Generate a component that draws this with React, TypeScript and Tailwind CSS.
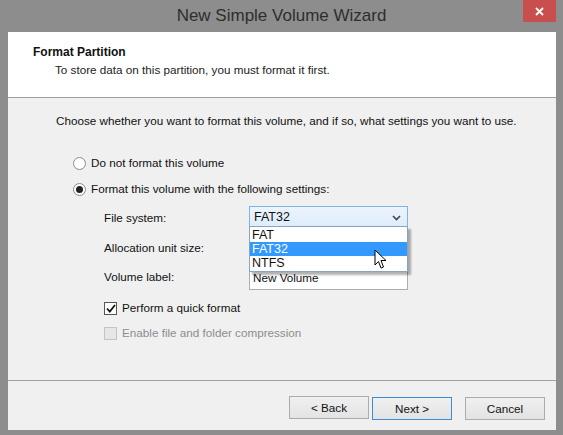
import { useState } from 'react';

const font = { fontFamily: '"Liberation Sans", Arial, sans-serif' };

function Radio({ checked, label, top }: { checked: boolean; label: string; top: string }) {
  return (
    <div className={`flex items-center h-[16px] ${top}`}>
      <span className="w-[13px] h-[13px] rounded-full border border-[#8a8a8a] bg-white flex items-center justify-center">
        {checked && <span className="w-[7px] h-[7px] rounded-full bg-[#222]" />}
      </span>
      <span className="ml-[5px] text-[11.7px] text-[#111]">{label}</span>
    </div>
  );
}

function Pointer() {
  return (
    <svg width="14" height="21" viewBox="0 0 14 21" className="absolute left-[374px] top-[249px]">
      <path
        d="M1 1 L1 16 L4.5 12.5 L7 19 L9.5 18 L7 11.5 L12 11.5 Z"
        fill="#fff"
        stroke="#000"
        strokeWidth="1"
        strokeLinejoin="round"
      />
    </svg>
  );
}

function WizardButton({ children, focused }: { children: string; focused?: boolean }) {
  return (
    <button
      className={`w-[80px] h-[23px] text-[11.7px] text-[#111] bg-gradient-to-b from-[#f0f0f0] to-[#e3e3e3] border ${
        focused ? 'border-[#3c8cd7]' : 'border-[#acacac]'
      }`}
    >
      {children}
    </button>
  );
}

export default function App() {
  const [fs] = useState('FAT32');
  const options = ['FAT', 'FAT32', 'NTFS'];

  return (
    <div className="w-[563px] h-[435px] bg-[#8d8d8d] flex flex-col relative overflow-hidden" style={font}>
      {/* title bar */}
      <div className="h-[32px] flex items-center justify-center relative shrink-0">
        <span className="text-[17px] text-[#2e2e2e] -mt-[1px]">New Simple Volume Wizard</span>
        <div className="absolute top-0 right-[7px] w-[33px] h-[22px] bg-[#c94f4f] flex items-center justify-center">
          <svg width="9" height="9" viewBox="0 0 9 9">
            <path d="M1 1 L8 8 M8 1 L1 8" stroke="#fff" strokeWidth="1.8" />
          </svg>
        </div>
      </div>

      {/* client area */}
      <div className="flex-1 ml-[8px] mr-[7px] mb-[5px] flex flex-col bg-[#f0f0f0]">
        <div className="h-[66px] bg-white border-b border-[#a0a0a0] shrink-0 pl-[25px] pt-[13px]">
          <div className="text-[12px] font-bold text-[#111] leading-[14px]">Format Partition</div>
          <div className="text-[11.7px] text-[#222] leading-[14px] mt-[4px] pl-[22px]">
            To store data on this partition, you must format it first.
          </div>
        </div>

        <div className="flex-1 relative pl-[48px] pt-[16px] text-[11.7px]">
          <div className="text-[#111] leading-[14px]">
            Choose whether you want to format this volume, and if so, what settings you want to use.
          </div>

          <div className="pl-[17px]">
            <Radio checked={false} label="Do not format this volume" top="mt-[27px]" />
            <Radio checked label="Format this volume with the following settings:" top="mt-[10px]" />

            <div className="pl-[31px] mt-[9px] text-[#111]">
              <div className="flex items-center h-[23px]">
                <span className="w-[145px]">File system:</span>
                <div className="w-[159px] h-[23px] border border-[#7eb4ea] bg-gradient-to-b from-[#ecf4fc] to-[#dcecfc] flex items-center pl-[4px] pr-[6px] text-[12.5px]">
                  <span className="flex-1">{fs}</span>
                  <svg width="9" height="6" viewBox="0 0 9 6">
                    <path d="M1 1 L4.5 4.5 L8 1" stroke="#444" strokeWidth="1.6" fill="none" />
                  </svg>
                </div>
              </div>

              <div className="flex items-center h-[23px] mt-[7px]">
                <span className="w-[145px]">Allocation unit size:</span>
                <div className="w-[159px] h-[23px] border border-[#acacac] bg-[#e8e8e8]" />
              </div>

              <div className="flex items-center h-[26px] mt-[5px]">
                <span className="w-[145px]">Volume label:</span>
                <div className="w-[159px] h-[26px] border border-[#abadb3] bg-white flex items-center pl-[3px] pt-[2px]">
                  New Volume
                </div>
              </div>

              {/* open drop-down list of the file system box */}
              <div className="absolute left-[241px] top-[128px] w-[159px] border border-[#8aa4c0] bg-white shadow-[3px_3px_2px_rgba(0,0,0,0.3)] py-[1px] text-[12.5px]">
                {options.map((o) => (
                  <div
                    key={o}
                    className={`h-[14px] leading-[14px] pl-[2px] ${o === fs ? 'bg-[#3399ff] text-white' : 'text-[#111]'}`}
                  >
                    {o}
                  </div>
                ))}
              </div>
            </div>

            <div className="pl-[31px] mt-[10px]">
              <div className="flex items-center h-[16px]">
                <span className="w-[13px] h-[13px] border border-[#555] bg-white flex items-center justify-center">
                  <svg width="10" height="9" viewBox="0 0 10 9">
                    <path d="M1 4.5 L3.8 7.5 L9 1" stroke="#111" strokeWidth="1.8" fill="none" />
                  </svg>
                </span>
                <span className="ml-[5px] text-[#111]">Perform a quick format</span>
              </div>
              <div className="flex items-center h-[16px] mt-[9px]">
                <span className="w-[13px] h-[13px] border border-[#c4c4c4] bg-[#e6e6e6]" />
                <span className="ml-[5px] text-[#8d8d8d]">Enable file and folder compression</span>
              </div>
            </div>
          </div>
        </div>

        <div className="h-[50px] shrink-0 border-t border-[#a0a0a0] flex items-start justify-end pt-[15px] pr-[11px]">
          <WizardButton>&lt; Back</WizardButton>
          <div className="ml-[3px]">
            <WizardButton focused>Next &gt;</WizardButton>
          </div>
          <div className="ml-[13px]">
            <WizardButton>Cancel</WizardButton>
          </div>
        </div>
      </div>

      <Pointer />
    </div>
  );
}
